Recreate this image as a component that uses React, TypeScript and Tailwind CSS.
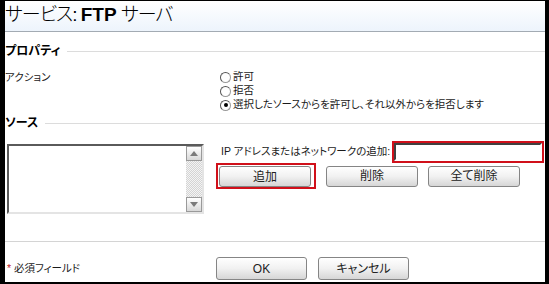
import React from "react";

const jp = "font-['Liberation_Sans','Noto_Sans_CJK_JP',sans-serif]";

interface BtnProps {
  label: string;
  w?: string;
}

const Btn: React.FC<BtnProps> = ({ label, w = "w-[92px] h-[21px]" }) => (
  <button
    className={`${w} rounded-[3px] border border-[#858585] bg-gradient-to-b from-white via-[#f1f1f1] to-[#d6d6d6] text-[12px] leading-none text-[#222]`}
  >
    {label}
  </button>
);

const Radio: React.FC<{ label: string; checked?: boolean }> = ({ label, checked }) => (
  <label className="flex h-[14px] items-center gap-[2px]">
    <span className="flex h-[11px] w-[11px] items-center justify-center rounded-full border border-[#9a9a9a] border-t-[#555] border-l-[#555] bg-white">
      {checked && <span className="h-[4px] w-[4px] rounded-full bg-black" />}
    </span>
    <span>{label}</span>
  </label>
);

const Heading: React.FC<{ label: string }> = ({ label }) => (
  <div className="flex h-[14px] items-center gap-[7px]">
    <span className="text-[12px] font-bold text-black">{label}</span>
    <div className="h-px flex-1 bg-[#dcdcdc]" />
  </div>
);

export default function App() {
  return (
    <div className={`h-[284px] w-[549px] bg-black pl-[5px] pr-[4px] pt-px pb-[2px] ${jp} [font-feature-settings:"palt"]`}>
      <div className="flex h-full flex-col bg-white text-[10.5px] text-[#1a1a1a]">
        <div className="flex h-[31px] items-center border-b border-[#a3abb3] bg-gradient-to-b from-white to-[#edf4fc] pb-[2px]">
          <span className="text-[19px] font-light tracking-[-1px] text-black">
            サービス: <span className="font-bold tracking-normal">FTP</span> サーバ
          </span>
        </div>

        <div className="mt-[12px]">
          <Heading label="プロパティ" />
        </div>

        <div className="mt-[12px] flex">
          <div className="w-[215px] leading-[14px]">アクション</div>
          <div className="flex flex-col">
            <Radio label="許可" />
            <Radio label="拒否" />
            <Radio label="選択したソースからを許可し、それ以外からを拒否します" checked />
          </div>
        </div>

        <div className="mt-[4px]">
          <Heading label="ソース" />
        </div>

        <div className="mt-[11px] flex">
          <div className="w-[211px] pl-[2px] pt-[3px]">
            <div className="flex h-[70px] w-[197px] border-2 border-t-[#5a5a5a] border-l-[#5a5a5a] border-r-[#e4e4e4] border-b-[#e4e4e4] bg-white">
              <div className="flex-1" />
              <div className="flex w-[16px] flex-col justify-between bg-[repeating-conic-gradient(#d4d4d4_0_25%,#f4f4f4_0_50%)] bg-[length:2px_2px]">
                <div className="flex h-[15px] items-center justify-center border border-[#9a9a9a] bg-gradient-to-b from-white to-[#d8d8d8]">
                  <svg width="8" height="5" viewBox="0 0 8 5">
                    <path d="M0 5 L4 0 L8 5 Z" fill="#7a7a7a" />
                  </svg>
                </div>
                <div className="flex h-[15px] items-center justify-center border border-[#9a9a9a] bg-gradient-to-b from-white to-[#d8d8d8]">
                  <svg width="8" height="5" viewBox="0 0 8 5">
                    <path d="M0 0 L4 5 L8 0 Z" fill="#7a7a7a" />
                  </svg>
                </div>
              </div>
            </div>
          </div>

          <div className="flex flex-col">
            <div className="flex h-[22px] items-center">
              <span className="w-[176px] whitespace-nowrap pl-[5px]">IP アドレスまたはネットワークの追加:</span>
              <div className="h-[22px] w-[152px] border-2 border-[#d0101a]">
                <div className="h-full w-full border-2 border-t-[#404040] border-l-[#404040] border-r-white border-b-white bg-white" />
              </div>
            </div>
            <div className="flex items-center gap-[10px]">
              <div className="h-[26px] w-[100px] border-2 border-[#d0101a] p-px">
                <Btn label="追加" />
              </div>
              <Btn label="削除" />
              <Btn label="全て削除" />
            </div>
          </div>
        </div>

        <div className="mt-[27px] h-px bg-[#d4d4d4]" />

        <div className="mt-[15px] flex items-center">
          <div className="w-[211px] pl-[2px]">
            <span className="text-[#c0202a]">*</span> 必須フィールド
          </div>
          <div className="flex gap-[11px]">
            <Btn label="OK" w="w-[91px] h-[23px]" />
            <Btn label="キャンセル" w="w-[91px] h-[23px]" />
          </div>
        </div>
      </div>
    </div>
  );
}
